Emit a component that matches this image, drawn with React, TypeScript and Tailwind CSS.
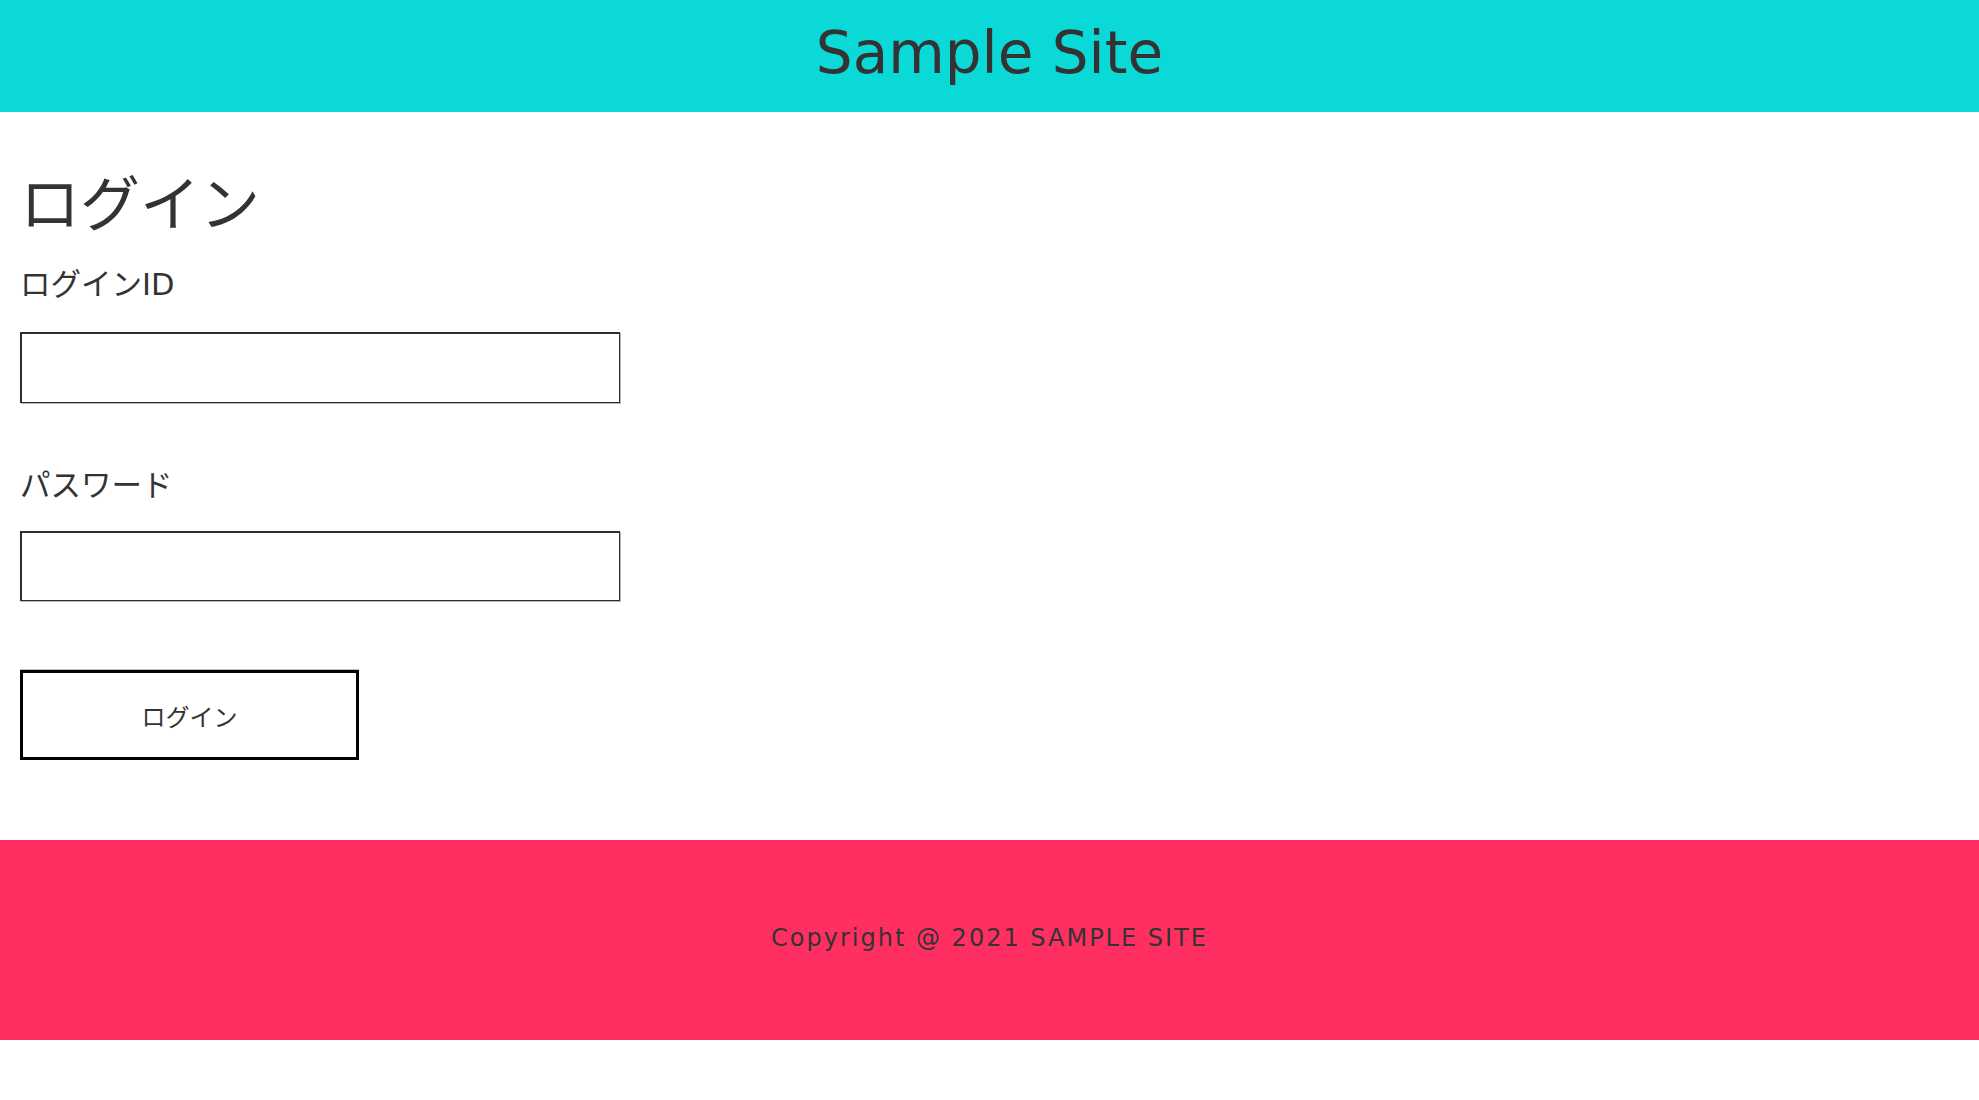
import React from "react";

const font = { fontFamily: '"DejaVu Sans", "Noto Sans CJK JP", sans-serif' };

export default function App() {
  return (
    <div className="min-h-[1100px] bg-white text-[#333]" style={font}>
      <header className="h-[112px] bg-[#0bd9d7] flex items-center justify-center">
        <h1 className="text-[58px] leading-none font-normal pb-[6px]">Sample Site</h1>
      </header>
      <main className="px-5 pt-[57px] h-[728px]">
        <h2 className="text-[60px] leading-[72px] font-normal">ログイン</h2>
        <div className="mt-[22px] text-[30.5px] leading-[44px]">ログインID</div>
        <input
          type="text"
          className="mt-[25px] block w-[600px] h-[71px] bg-white border-t-2 border-l-2 border-r border-b border-[#2e2e2e] shadow-[1px_1px_0_#b5b5b5] outline-none"
        />
        <div className="mt-[61px] text-[30.5px] leading-[44px]">パスワード</div>
        <input
          type="password"
          className="mt-[23px] block w-[600px] h-[70px] bg-white border-t-2 border-l-2 border-r border-b border-[#2e2e2e] shadow-[1px_1px_0_#b5b5b5] outline-none"
        />
        <button
          type="button"
          className="mt-[69px] block w-[339px] h-[90px] bg-white border-[3px] border-black shadow-[0_-1px_0_#c0c0c0] text-[24px] text-[#333] pt-[6px]"
        >
          ログイン
        </button>
      </main>
      <footer className="h-[200px] bg-[#ff2f61] flex items-center justify-center">
        <p className="text-[24px] tracking-[2px] text-[#333] pb-[4px]">Copyright @ 2021 SAMPLE SITE</p>
      </footer>
    </div>
  );
}
